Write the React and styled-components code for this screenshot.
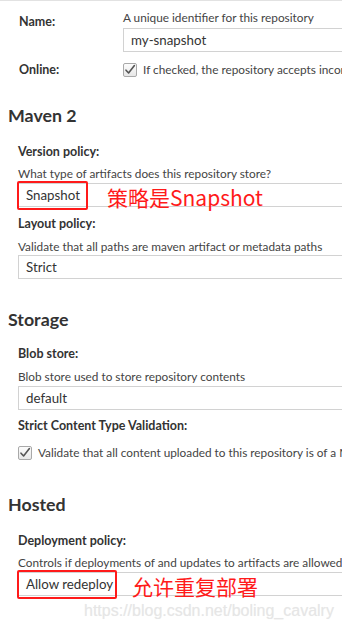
import React from 'react'
import styled, { createGlobalStyle } from 'styled-components'

const GlobalStyle = createGlobalStyle`
  html, body {
    margin: 0;
    padding: 0;
    background: #fff;
  }
  body {
    font-family: Lato, "Liberation Sans", sans-serif;
    color: #333;
    overflow: hidden;
  }
`

const Page = styled.div`
  width: 342px;
  height: 629px;
  position: relative;
  overflow: hidden;
  border-top: 1px solid #e2e2e2;
  box-sizing: border-box;
`

const GeneralGrid = styled.div`
  display: grid;
  grid-template-columns: 104px 1fr;
  padding-left: 19px;
  padding-top: 10px;
`

const GridLabel = styled.div`
  font-size: 12.5px;
  font-weight: 700;
  line-height: 16px;
  color: #333;
  padding-top: ${(p) => p.top || 0}px;
`

const GridField = styled.div`
  display: flex;
  flex-direction: column;
  min-width: 0;
`

const Section = styled.section`
  padding-left: 8px;
  margin-top: ${(p) => p.top || 0}px;
`

const Heading = styled.h2`
  margin: 0;
  padding-bottom: 4px;
  font-size: 17.8px;
  font-weight: 700;
  line-height: 16px;
  color: #333;
`

const Field = styled.div`
  padding-left: 10px;
  margin-top: ${(p) => p.top || 0}px;
`

const Label = styled.div`
  font-size: 12.5px;
  font-weight: 700;
  line-height: 16px;
  color: #333;
`

const Help = styled.div`
  font-size: 11.8px;
  line-height: 14px;
  color: #444;
  white-space: nowrap;
  margin-top: ${(p) => p.top || 0}px;
`

const Input = styled.div`
  position: relative;
  display: flex;
  align-items: center;
  height: 24px;
  box-sizing: border-box;
  margin-top: ${(p) => p.top || 0}px;
  margin-right: -20px;
  padding-left: 7px;
  border: 1px solid #d2d2d2;
  font-size: 13.3px;
  color: #333;
  white-space: nowrap;
`

const Mark = styled.span`
  position: absolute;
  left: -2px;
  top: -3px;
  width: ${(p) => p.w}px;
  height: 29px;
  border: 2px solid #ff1a1a;
  border-radius: 2px;
  box-sizing: border-box;
`

const Note = styled.span`
  position: absolute;
  left: ${(p) => p.left}px;
  top: -1px;
  font-family: "Noto Sans CJK SC", sans-serif;
  font-size: 21px;
  line-height: 28px;
  color: #ff1a1a;
`

const CheckRow = styled.div`
  display: flex;
  align-items: center;
  gap: 6px;
  font-size: 11.8px;
  line-height: 14px;
  color: #444;
  white-space: nowrap;
  margin-top: ${(p) => p.top || 0}px;

  svg {
    flex: none;
  }
`

const Watermark = styled.div`
  padding-left: 84px;
  margin-top: 5px;
  font-family: "Liberation Sans", Arial, sans-serif;
  font-size: 16px;
  line-height: 20px;
  color: #e6e6e6;
  text-shadow: 0 0 1px #f2f2f2;
  white-space: nowrap;
`

const Checkbox = () => (
  <svg width="14" height="14" viewBox="0 0 14 14">
    <defs>
      <linearGradient id="cb" x1="0" y1="0" x2="0" y2="1">
        <stop offset="0" stopColor="#fdfdfd" />
        <stop offset="1" stopColor="#e6e6e6" />
      </linearGradient>
    </defs>
    <rect x="0.5" y="0.5" width="13" height="13" rx="1.5" fill="url(#cb)" stroke="#a9a9a9" />
    <path d="M3 7.2 L5.6 10 L11.4 2.6" fill="none" stroke="#555" strokeWidth="1.6" strokeLinecap="round" strokeLinejoin="round" />
  </svg>
)

const App = () => {
  return (
    <Page>
      <GlobalStyle />
      <GeneralGrid>
        <GridLabel top={3}>Name:</GridLabel>
        <GridField>
          <Help>A unique identifier for this repository</Help>
          <Input top={3}>my-snapshot</Input>
        </GridField>
        <GridLabel top={10}>Online:</GridLabel>
        <GridField>
          <CheckRow top={11}>
            <Checkbox />
            If checked, the repository accepts incoming requests
          </CheckRow>
        </GridField>
      </GeneralGrid>

      <Section top={29}>
        <Heading>Maven 2</Heading>
        <Field top={17}>
          <Label>Version policy:</Label>
          <Help top={7}>What type of artifacts does this repository store?</Help>
          <Input top={2}>
            Snapshot
            <Mark w={71} />
            <Note left={88}>策略是Snapshot</Note>
          </Input>
        </Field>
        <Field top={9}>
          <Label>Layout policy:</Label>
          <Help top={8}>Validate that all paths are maven artifact or metadata paths</Help>
          <Input top={1}>Strict</Input>
        </Field>
      </Section>

      <Section top={32}>
        <Heading>Storage</Heading>
        <Field top={15}>
          <Label>Blob store:</Label>
          <Help top={8}>Blob store used to store repository contents</Help>
          <Input top={2}>default</Input>
        </Field>
        <Field top={8}>
          <Label>Strict Content Type Validation:</Label>
          <CheckRow top={12}>
            <Checkbox />
            Validate that all content uploaded to this repository is of a MIME type
          </CheckRow>
        </Field>
      </Section>

      <Section top={36}>
        <Heading>Hosted</Heading>
        <Field top={17}>
          <Label>Deployment policy:</Label>
          <Help top={7}>Controls if deployments of and updates to artifacts are allowed</Help>
          <Input top={2}>
            Allow redeploy
            <Mark w={100} />
            <Note left={113}>允许重复部署</Note>
          </Input>
        </Field>
      </Section>

      <Watermark>https://blog.csdn.net/boling_cavalry</Watermark>
    </Page>
  )
}

export default App
